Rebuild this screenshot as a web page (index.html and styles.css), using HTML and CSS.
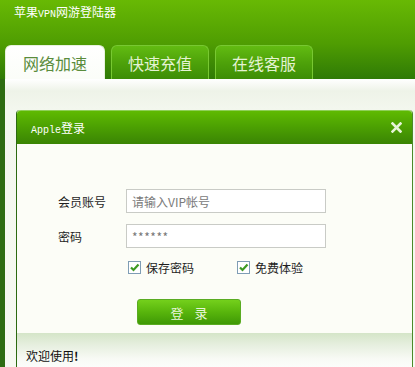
FILE: index.html
```html
<!DOCTYPE html>
<html lang="zh">
<head>
<meta charset="utf-8">
<link rel="stylesheet" href="styles.css">
</head>
<body>
<div class="app">
  <header class="top">
    <div class="title">苹果<span class="mono">VPN</span>网游登陆器</div>
    <nav class="tabs">
      <div class="tab active">网络加速</div>
      <div class="tab">快速充值</div>
      <div class="tab">在线客服</div>
    </nav>
  </header>
  <main class="content">
    <section class="dialog">
      <div class="dlg-head">
        <span class="dlg-title"><span class="mono">Apple</span>登录</span>
        <svg class="close" width="11" height="11" viewBox="0 0 11 11"><path d="M1.5 1.5 L9.5 9.5 M9.5 1.5 L1.5 9.5" stroke="#e6f4d8" stroke-width="2.6" stroke-linecap="square"/></svg>
      </div>
      <div class="dlg-body">
        <div class="row">
          <label class="lbl">会员账号</label>
          <div class="input placeholder">请输入VIP帐号</div>
        </div>
        <div class="row">
          <label class="lbl">密码</label>
          <div class="input pwd">******</div>
        </div>
        <div class="checks">
          <span class="check"><span class="box"><svg width="11" height="11" viewBox="0 0 11 11"><path d="M2 5.5 L4.5 8 L9.5 2.5" fill="none" stroke="#3d9a22" stroke-width="2.2"/></svg></span>保存密码</span>
          <span class="check"><span class="box"><svg width="11" height="11" viewBox="0 0 11 11"><path d="M2 5.5 L4.5 8 L9.5 2.5" fill="none" stroke="#3d9a22" stroke-width="2.2"/></svg></span>免费体验</span>
        </div>
        <div class="btn-row"><button class="btn">登<span class="sp"></span>录</button></div>
      </div>
      <div class="dlg-foot">欢迎使用<b>!</b></div>
    </section>
  </main>
</div>
</body>
</html>
```
FILE: styles.css
```css
html, body {
  margin: 0;
  padding: 0;
}
body {
  width: 415px;
  height: 367px;
  overflow: hidden;
  font-family: "Noto Sans CJK SC", "Noto Sans", sans-serif;
  font-size: 12px;
  color: #1e1e1e;
}
.app {
  display: flex;
  flex-direction: column;
  height: 367px;
}
.mono {
  font-family: "Liberation Mono", monospace;
  font-size: 10px;
}
.top {
  height: 79px;
  background: linear-gradient(#68b904, #4f9d02 55%, #2f7a06);
  display: flex;
  flex-direction: column;
  box-sizing: border-box;
}
.title {
  color: #ffffff;
  font-size: 12px;
  line-height: 14px;
  padding: 5px 0 0 14px;
  height: 40px;
  box-sizing: border-box;
}
.tabs {
  display: flex;
  gap: 6px;
  padding-left: 5px;
  align-items: flex-end;
  height: 34px;
  margin-top: 5px;
}
.tab {
  width: 98px;
  height: 34px;
  box-sizing: border-box;
  border-radius: 6px 6px 0 0;
  display: flex;
  align-items: center;
  justify-content: center;
  font-size: 16px;
  color: #e4f3d2;
  background: linear-gradient(#62bb12, #4ea20a 50%, #3d8d06);
  border: 1px solid #78c832;
  border-bottom: none;
}
.tab.active {
  width: 100px;
  background: linear-gradient(#ffffff, #fbfdf8);
  color: #5a8c3c;
  border-color: #e8f2de;
}
.content {
  flex: 1;
  border-left: 5px solid #2e6c12;
  background: linear-gradient(#ffffff, #eef3e8 12px, #f3f7ee 30px, #f6f9f1);
  padding: 31px 2px 0 11px;
  overflow: hidden;
}
.dialog {
  border-left: 1px solid #2c6a10;
  border-right: 1px solid #4b8a2a;
  border-radius: 4px 4px 0 0;
  background: #fcfdf7;
  height: 320px;
}
.dlg-head {
  height: 34px;
  border-radius: 4px 4px 0 0;
  background: linear-gradient(#5fba02, #4da202 45%, #3a8404);
  border-top: 1px solid #8fcf5a;
  box-sizing: border-box;
  display: flex;
  align-items: center;
  justify-content: space-between;
  padding: 0 10px 0 14px;
  color: #ffffff;
}
.dlg-title {
  font-size: 12px;
}
.close {
  display: block;
}
.dlg-body {
  padding: 45px 0 0 41px;
  height: 189px;
  box-sizing: border-box;
}
.row {
  display: flex;
  align-items: center;
  height: 24px;
  margin-bottom: 11px;
}
.lbl {
  width: 68px;
  font-size: 12px;
  color: #1e1e1e;
}
.input {
  width: 200px;
  height: 24px;
  box-sizing: border-box;
  border: 1px solid #c9cbc6;
  background: #ffffff;
  padding-left: 5px;
  display: flex;
  align-items: center;
  font-size: 12px;
}
.placeholder {
  color: #7a7a7a;
}
.pwd {
  color: #777;
  letter-spacing: 0.5px;
}
.checks {
  display: flex;
  padding-left: 70px;
  height: 16px;
  align-items: center;
}
.check {
  display: inline-flex;
  align-items: center;
  width: 109px;
  font-size: 12px;
  color: #1e1e1e;
}
.box {
  width: 13px;
  height: 13px;
  box-sizing: border-box;
  border: 1px solid #7f9db5;
  background: #ffffff;
  display: inline-flex;
  align-items: center;
  justify-content: center;
  margin-right: 5px;
}
.box svg {
  display: block;
}
.btn-row {
  padding: 24px 0 0 79px;
}
.btn {
  width: 104px;
  height: 26px;
  border: 1px solid #5aab22;
  border-radius: 3px;
  background: linear-gradient(#74d01c, #58b50c 50%, #3f9906);
  color: #eaf7dc;
  font-family: "Noto Sans CJK SC", sans-serif;
  font-size: 13px;
  display: flex;
  align-items: center;
  justify-content: center;
  padding: 0;
}
.sp {
  display: inline-block;
  width: 11px;
}
.dlg-foot {
  height: 40px;
  background: linear-gradient(#d4e5c8, #e6efdf 12px, #f8faf5 26px, #ffffff);
  padding: 14px 0 0 9px;
  box-sizing: border-box;
  font-size: 12px;
  color: #111;
}
```
